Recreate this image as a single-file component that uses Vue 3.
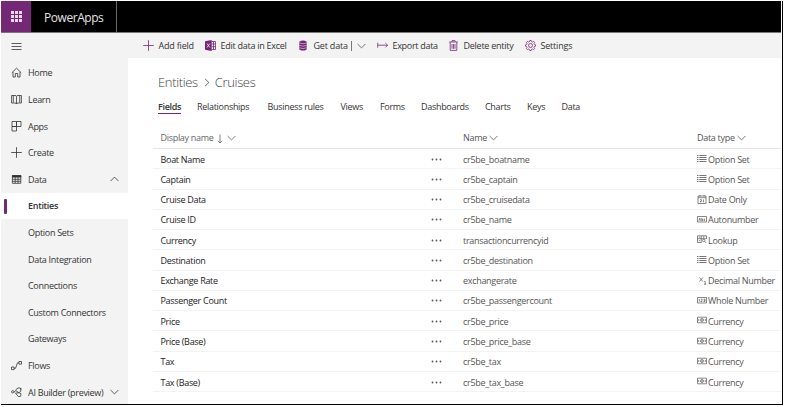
<script setup>
const sections = [
  { label: 'Home', icon: 'home' },
  { label: 'Learn', icon: 'book' },
  { label: 'Apps', icon: 'apps' },
  { label: 'Create', icon: 'plus' },
  { label: 'Data', icon: 'grid', chevron: 'up' },
  { label: 'Entities', active: true },
  { label: 'Option Sets' },
  { label: 'Data Integration' },
  { label: 'Connections' },
  { label: 'Custom Connectors' },
  { label: 'Gateways' },
  { label: 'Flows', icon: 'flow' },
  { label: 'AI Builder (preview)', icon: 'ai', chevron: 'down' },
]
const commands = [
  { label: 'Add field', icon: 'plus', x: 'c-add' },
  { label: 'Edit data in Excel', icon: 'excel', x: 'c-excel' },
  { label: 'Get data', icon: 'db', x: 'c-get', split: true },
  { label: 'Export data', icon: 'export', x: 'c-export' },
  { label: 'Delete entity', icon: 'trash', x: 'c-delete' },
  { label: 'Settings', icon: 'gear', x: 'c-settings' },
]
const tabs = [
  ['Fields', 39], ['Relationships', 70.5], ['Business rules', 73], ['Views', 39.5],
  ['Forms', 41], ['Dashboards', 64], ['Charts', 42], ['Keys', 34.5], ['Data', 30],
]
const rows = [
  ['Boat Name', 'cr5be_boatname', 'Option Set', 'list'],
  ['Captain', 'cr5be_captain', 'Option Set', 'list'],
  ['Cruise Data', 'cr5be_cruisedata', 'Date Only', 'date'],
  ['Cruise ID', 'cr5be_name', 'Autonumber', 'abc'],
  ['Currency', 'transactioncurrencyid', 'Lookup', 'lookup'],
  ['Destination', 'cr5be_destination', 'Option Set', 'list'],
  ['Exchange Rate', 'exchangerate', 'Decimal Number', 'decimal'],
  ['Passenger Count', 'cr5be_passengercount', 'Whole Number', 'number'],
  ['Price', 'cr5be_price', 'Currency', 'money'],
  ['Price (Base)', 'cr5be_price_base', 'Currency', 'money'],
  ['Tax', 'cr5be_tax', 'Currency', 'money'],
  ['Tax (Base)', 'cr5be_tax_base', 'Currency', 'money'],
]
const paths = {
  home: 'M.8 5.800 5.500 1.200l4.700 4.600M2 4.900v5.100h2.300V6.500h2.400v3.500H9V4.900',
  book: 'M.6 1.500h3.400q1.300 0 1.500.8.2-.8 1.500-.8h3.400v7.500H7q-1.300 0-1.500.9-.2-.9-1.500-.9H.6zM5.500 2.300v7.500M2.300 1.500v7M8.700 1.500v7',
  apps: 'M1 .5h4.500v5H1zM5.500.5h4.500v5H5.500zM1 5.500h4.500v4.500H1z',
  plus: 'M5.500.2v10.600M.2 5.500h10.600',
  flow: 'M.5 7h2.600v2.600H.5zM7.900 1.500h2.600v2.600H7.900zM3.100 8.300h1.400L6.500 2.800h1.400',
  ai: 'M.6 4.800a1.200 1.200 0 1 0 2.400 0 1.200 1.200 0 1 0-2.400 0M3 4.800h1.500M9.800 1.200v3L7.900 5.700 4.600 3.500Q5.500 1 8 .8q1.800 0 1.800 1.500zM4.600 6.200l2.700 3.300q2.600.8 2.600-1.500V6.500L7.900 5.700z',
  export: 'M.7 2.700v5M1 5.200h9.600M8.400 3l2.200 2.200L8.400 7.400',
  trash: 'M1.200 2h8.600M4 2V.6h3V2M2.200 2v8.400h6.600V2M4 4v4.800M5.500 4v4.800M7 4v4.800',
}
</script>

<template>
  <div class="window">
    <header class="topbar">
      <div class="waffle"><i v-for="n in 9" :key="n" /></div>
      <div class="brand">PowerApps</div>
    </header>
    <div class="body">
      <nav class="side">
        <div class="item"><svg class="ico" viewBox="0 0 11 11"><path d="M.5 2.500h10M.5 5.500h10M.5 8.500h10" /></svg></div>
        <div v-for="s in sections" :key="s.label" class="item" :class="{ active: s.active }">
          <svg v-if="s.icon === 'grid'" class="ico" viewBox="0 0 11 11"><path class="frame" d="M1.400 1.600h8.400v7.700H1.400z" /><path class="fill" d="M1 1.200h9.200v2.300H1z" /><path d="M1.400 5.300h8.400M1.400 7.300h8.400M4.200 3v6.300M7 3v6.300" /></svg>
          <svg v-else-if="s.icon" class="ico" viewBox="0 0 11 11"><path :d="paths[s.icon]" /></svg>
          <span v-else class="ico" />
          <span class="lbl">{{ s.label }}</span>
          <svg v-if="s.chevron" class="chev" viewBox="0 0 9 6"><path :d="s.chevron === 'up' ? 'M.6 5 4.500 1.100 8.400 5' : 'M.6 1 4.500 4.900 8.400 1'" /></svg>
        </div>
      </nav>
      <main class="main">
        <div class="commands">
          <div v-for="c in commands" :key="c.label" class="cmd" :class="c.x">
            <svg v-if="c.icon === 'excel'" class="ico" viewBox="0 0 11 11">
              <path class="fill" d="M0 1.200 6.700 0v11L0 9.800z" /><path d="M6.500 1.500h4v8h-4M8.500 1.500v8M6.500 4h4M6.500 6.700h4" /><path class="cut" d="m2 3.500 2.800 4M4.800 3.500 2 7.500" />
            </svg>
            <svg v-else-if="c.icon === 'db'" class="ico" viewBox="0 0 11 11">
              <path class="fill" d="M1.300 1.700Q5-.7 8.700 1.700v7.700q-3.700 2.400-7.400 0z" /><path class="cut thin" d="M1.300 3q3.700 1.500 7.400 0M1.300 5.400q3.700 1.500 7.400 0M1.300 7.800q3.700 1.500 7.400 0" />
            </svg>
            <svg v-else-if="c.icon === 'gear'" class="ico" viewBox="0 0 11 11">
              <path d="m4.500 1.600.3-1.100h1.400l.3 1.100 1.100.4 1-.6 1 1-.6 1 .4 1.100 1.100.3v1.400l-1.100.3L9 7.600l.6 1-1 1-1-.6-1.100.4-.3 1.100H4.800l-.3-1.100L3.400 9l-1 .6-1-1 .6-1-.4-1.100L.5 6.200V4.800l1.100-.3L2 3.400l-.6-1 1-1 1 .6z" /><circle cx="5.500" cy="5.500" r="2" />
            </svg>
            <svg v-else class="ico" viewBox="0 0 11 11"><path :d="paths[c.icon]" /></svg>
            <span>{{ c.label }}</span>
            <template v-if="c.split"><i class="bar" /><svg class="chev" viewBox="0 0 9 6"><path d="M.6 1 4.500 4.900 8.400 1" /></svg></template>
          </div>
        </div>
        <h1 class="crumbs"><span>Entities</span><svg viewBox="0 0 6 9"><path d="m1 .8 3.800 3.700L1 8.200" /></svg><span>Cruises</span></h1>
        <div class="tabs">
          <div v-for="(t, i) in tabs" :key="t[0]" class="tab" :class="{ current: i === 0 }" :style="{ width: t[1] + 'px' }"><span>{{ t[0] }}</span></div>
        </div>
        <div class="table">
          <div class="row head">
            <div class="name">Display name <svg class="arrow" viewBox="0 0 6 10"><path d="M3 .5v8.500M.8 6.800 3 9l2.200-2.200" /></svg><svg class="chev" viewBox="0 0 9 6"><path d="M.6 1 4.500 4.900 8.400 1" /></svg></div>
            <div class="more" />
            <div class="key">Name <svg class="chev" viewBox="0 0 9 6"><path d="M.6 1 4.500 4.900 8.400 1" /></svg></div>
            <div class="type">Data type <svg class="chev" viewBox="0 0 9 6"><path d="M.6 1 4.500 4.900 8.400 1" /></svg></div>
          </div>
          <div v-for="r in rows" :key="r[0]" class="row">
            <div class="name">{{ r[0] }}</div>
            <div class="more"><svg viewBox="0 0 11 3"><circle cx="1.500" cy="1.500" r=".9" /><circle cx="5.500" cy="1.500" r=".9" /><circle cx="9.500" cy="1.500" r=".9" /></svg></div>
            <div class="key">{{ r[1] }}</div>
            <div class="type">
              <svg class="tico" viewBox="0 0 10 9">
                <path v-if="r[3] === 'list'" class="list" d="M0 1.500h1.500M2.300 1.500H9.500M0 3.500h1.500M2.300 3.500H9.500M0 5.500h1.500M2.300 5.500H9.500M0 7.500h1.500M2.300 7.500H9.500" />
                <path v-else-if="r[3] === 'date'" d="M1 1h8v7.500H1zM1 2.700h8M3 0v1.500M7 0v1.500M3 4.700h1.500v1L3 6.800h1.700M6.500 4.500v2.700" />
                <path v-else-if="r[3] === 'abc'" d="M.5 1.500h9v5.500h-9zM2 5.800l.8-2.600.8 2.600M4.800 3v2.700h1v-1.300h-1M8 4.200h-.9v1.400H8" />
                <path v-else-if="r[3] === 'lookup'" d="M.5.8h9M.5.8v6.700h4M.5 3.700h9M4.200.8v6.700M9.500.8v3M6.800.8v2.900M5.500 5.500a1.200 1.200 0 1 0 2.400 0 1.200 1.200 0 1 0-2.400 0M7.600 6.400 9 7.800M1.800 5.600h1.200M1.800 2.200h1.200" />
                <path v-else-if="r[3] === 'decimal'" d="m2.500 1.500 3.300 4M5.800 1.500 2.500 5.500M7.200 5.500h1v2.700M7 8.200h2.200" />
                <path v-else-if="r[3] === 'number'" d="M.5 1.500h9v5.500h-9zM2.300 3v2.700M3.800 3.200h1.300v1l-1.300 1.300h1.500M6.500 3.200H8v2.300H6.500M6.800 4.300H8" />
                <g v-else><path d="M.5 1.200h9v5.600h-9z" /><circle cx="5" cy="4" r="1.500" /><path d="M1.700 3v2M8.300 3v2M5 3v2" /></g>
              </svg>
              <span>{{ r[2] }}</span>
            </div>
          </div>
        </div>
      </main>
    </div>
  </div>
</template>

<style>
body { background: #fff; overflow: hidden; }
#app { padding: 1px 0 0 1px; }
</style>

<style scoped>
.window { box-sizing: border-box; width: 782px; height: 404px; padding-right: 1px; border-right: 1px solid #000; border-bottom: 1px solid #000; font-family: "Open Sans", "Noto Sans", sans-serif; font-size: 9px; letter-spacing: -.3px; color: #333; display: flex; flex-direction: column; }
svg { fill: none; stroke: currentColor; stroke-width: .8; flex: none; }
.topbar { height: 31px; background: #000; display: flex; border-bottom: 1px solid #777; flex: none; }
.waffle { width: 30px; background: #742774; display: grid; grid-template-columns: repeat(3, 3px); gap: 1px; place-content: center; }
.waffle i { width: 3px; height: 3px; background: #e6d6e6; }
.brand { box-sizing: border-box; width: 86px; padding-left: 13px; border-right: 1px solid #666; color: #e4e4e4; font-size: 12px; letter-spacing: -.45px; line-height: 33px; }
.body { flex: 1; display: flex; min-height: 0; }
.side { width: 127px; background: #f3f3f3; flex: none; }
.item { position: relative; height: 26.600px; display: flex; align-items: center; white-space: nowrap; }
.ico { width: 11px; height: 11px; margin-left: 10px; margin-right: 6px; flex: none; }
.active { background: #fff; font-weight: 600; }
.active::before { content: ""; position: absolute; left: 3px; top: 6px; width: 3px; height: 15px; border-radius: 1px; background: #742774; }
.chev { width: 9px; height: 6px; }
.side .chev { position: absolute; left: 109px; }
.fill { fill: currentColor; stroke: none; }
.cut { stroke: #f3f3f3; }
.thin { stroke-width: .55; }
.main { flex: 1; min-width: 0; }
.commands { height: 25px; background: #f3f3f3; display: flex; align-items: center; }
.cmd { display: flex; align-items: center; white-space: nowrap; letter-spacing: -.2px; flex: none; }
.cmd .ico { color: #742774; margin: 0 4.500px 0 0; }
.c-add { width: 62px; margin-left: 15px; }
.c-excel { width: 93px; letter-spacing: -.27px; }
.c-get { width: 79px; }
.c-get .chev { color: #555; }
.c-export { width: 71px; letter-spacing: -.3px; }
.c-delete { width: 77px; letter-spacing: -.25px; }
.bar { width: 1px; height: 10px; background: #777; margin: 0 5px 0 3.500px; }
.crumbs { margin: 16px 0 0 30px; font-size: 13px; letter-spacing: -.35px; line-height: 17px; height: 17px; padding-bottom: 1px; font-weight: 300; color: #444; display: flex; align-items: center; }
.crumbs svg { width: 6px; height: 9px; margin: 0 5px 0 6px; }
.tabs { display: flex; margin: 7px 0 0 30px; height: 17px; line-height: 15px; }
.tab { flex: none; white-space: nowrap; }
.current span { display: inline-block; height: 14px; font-weight: 600; border-bottom: 1px solid #742774; }
.table { margin: 11px 0 0 25px; }
.row { display: flex; align-items: center; height: 20.270px; box-sizing: border-box; padding-top: 1px; border-bottom: 1px solid #f3f3f3; white-space: nowrap; }
.head { height: 22px; padding-top: 0; color: #666; border-color: #e5e5e5; }
.name { width: 270px; box-sizing: content-box; padding-left: 7.500px; color: #222; flex: none; }
.head .name { color: #666; }
.more { width: 32.500px; display: flex; flex: none; }
.more svg { width: 11px; height: 3px; fill: #555; stroke: none; }
.key { width: 234px; color: #555; flex: none; }
.type { display: flex; align-items: center; color: #555; flex: none; }
.type .chev { margin-left: 2.500px; }
.tico { width: 10px; height: 9px; margin: 0 1px 1px 0; stroke-width: .7; }
.list { stroke: #777; stroke-width: 1; }
.arrow { width: 6px; height: 10px; margin: 0 4px 0 1px; vertical-align: middle; }
</style>
